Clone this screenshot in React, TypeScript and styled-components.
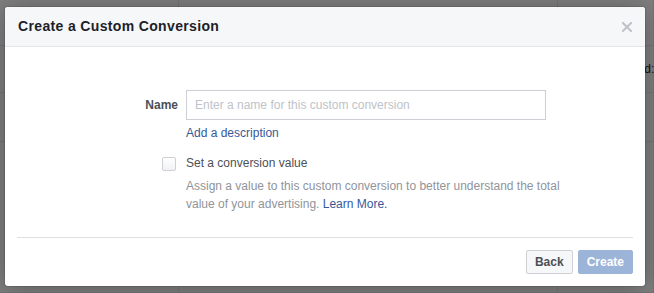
import React from 'react';
import styled, { createGlobalStyle } from 'styled-components';

const GlobalStyle = createGlobalStyle`
  html, body {
    margin: 0;
    padding: 0;
    width: 654px;
    height: 293px;
    overflow: hidden;
    background: #ffffff;
    font-family: 'Liberation Sans', Helvetica, Arial, sans-serif;
  }
`;

const Page = styled.div`
  width: 654px;
  height: 293px;
  position: relative;
  background: #ffffff;
`;

const BgTable = styled.div`
  display: grid;
  grid-template-columns: 179px 379px 96px;
  grid-template-rows: 46px 47px 49px 151px;
`;

const BgCell = styled.div<{ $pad?: number }>`
  border-right: 1px solid #e9ebee;
  border-bottom: 1px solid #e9ebee;
  padding-left: ${(p) => p.$pad ?? 0}px;
  font-size: 12px;
  color: #1d2129;
  display: flex;
  align-items: center;
`;

const Overlay = styled.div`
  position: absolute;
  inset: 0;
  background: rgba(0, 0, 0, 0.5);
`;

const Dialog = styled.div`
  position: absolute;
  left: 5px;
  top: 7px;
  width: 640px;
  background: #ffffff;
  border-radius: 3px;
  box-shadow: 0 2px 26px rgba(0, 0, 0, 0.3), 0 0 0 1px rgba(0, 0, 0, 0.1);
  overflow: hidden;
`;

const Header = styled.div`
  display: flex;
  align-items: center;
  justify-content: space-between;
  height: 39px;
  padding: 0 12px 0 13px;
  background: #f6f7f9;
  border-bottom: 1px solid #e5e5e5;
`;

const Title = styled.h2`
  margin: 0;
  font-size: 14px;
  font-weight: bold;
  color: #1d2129;
  line-height: 19px;
  letter-spacing: 0.35px;
`;

const Close = styled.button`
  border: 0;
  background: none;
  padding: 0;
  width: 12px;
  height: 12px;
  display: flex;
  align-items: center;
  justify-content: center;
  cursor: pointer;
`;

const Body = styled.div`
  padding: 43px 12px 24px 0;
  display: grid;
  grid-template-columns: 173px 1fr;
  column-gap: 8px;
  align-items: start;
`;

const Label = styled.label`
  justify-self: end;
  font-size: 12px;
  font-weight: bold;
  color: #4b4f56;
  line-height: 30px;
`;

const Field = styled.div`
  display: flex;
  flex-direction: column;
  align-items: flex-start;
`;

const Input = styled.input`
  box-sizing: border-box;
  width: 360px;
  height: 30px;
  border: 1px solid #ccd0d5;
  border-radius: 0;
  padding: 0 8px;
  font-family: inherit;
  font-size: 12px;
  color: #1d2129;
  outline: none;
  &::placeholder {
    color: #bec3c9;
  }
`;

const Link = styled.a`
  color: #365899;
  text-decoration: none;
  font-size: 12px;
  cursor: pointer;
`;

const DescLink = styled(Link)`
  margin-top: 5px;
  line-height: 16px;
`;

const CheckCell = styled.div`
  justify-self: end;
  margin-top: 16px;
  margin-right: 2px;
`;

const Checkbox = styled.span`
  display: block;
  box-sizing: border-box;
  width: 14px;
  height: 14px;
  border: 1px solid #ced0d4;
  border-radius: 2px;
  background: linear-gradient(#ffffff, #f1f2f4);
`;

const CheckText = styled.div`
  margin-top: 14px;
`;

const CheckLabel = styled.div`
  font-size: 12px;
  color: #4b4f56;
  line-height: 16px;
`;

const Help = styled.p`
  margin: 6px 0 0;
  width: 400px;
  font-size: 12px;
  line-height: 18px;
  color: #90949c;
`;

const Footer = styled.div`
  margin: 0 12px;
  padding: 12px 0;
  border-top: 1px solid #dddfe2;
  display: flex;
  justify-content: flex-end;
  gap: 5px;
`;

const Button = styled.button<{ $primary?: boolean }>`
  box-sizing: border-box;
  height: 24px;
  padding: 0 8px;
  border-radius: 2px;
  font-family: inherit;
  font-size: 12px;
  font-weight: bold;
  border: 1px solid ${(p) => (p.$primary ? '#9cb4d8' : '#ced0d4')};
  background: ${(p) => (p.$primary ? '#9cb4d8' : '#f6f7f9')};
  color: ${(p) => (p.$primary ? '#ffffff' : '#4b4f56')};
`;

const CloseIcon = () => (
  <svg width="10" height="10" viewBox="0 0 10 10">
    <path d="M1 1 L9 9 M9 1 L1 9" stroke="#bec2c9" strokeWidth="2" strokeLinecap="square" />
  </svg>
);

export default function App() {
  return (
    <>
      <GlobalStyle />
      <Page>
        <BgTable>
          <BgCell />
          <BgCell />
          <BgCell />
          <BgCell />
          <BgCell />
          <BgCell $pad={83}>Id:</BgCell>
          <BgCell />
          <BgCell />
          <BgCell />
          <BgCell />
          <BgCell />
          <BgCell />
        </BgTable>
        <Overlay />
        <Dialog>
          <Header>
            <Title>Create a Custom Conversion</Title>
            <Close aria-label="Close">
              <CloseIcon />
            </Close>
          </Header>
          <Body>
            <Label htmlFor="cc-name">Name</Label>
            <Field>
              <Input id="cc-name" placeholder="Enter a name for this custom conversion" />
              <DescLink>Add a description</DescLink>
            </Field>
            <CheckCell>
              <Checkbox />
            </CheckCell>
            <CheckText>
              <CheckLabel>Set a conversion value</CheckLabel>
              <Help>
                Assign a value to this custom conversion to better understand the total value of your
                advertising. <Link>Learn More.</Link>
              </Help>
            </CheckText>
          </Body>
          <Footer>
            <Button>Back</Button>
            <Button $primary>Create</Button>
          </Footer>
        </Dialog>
      </Page>
    </>
  );
}
